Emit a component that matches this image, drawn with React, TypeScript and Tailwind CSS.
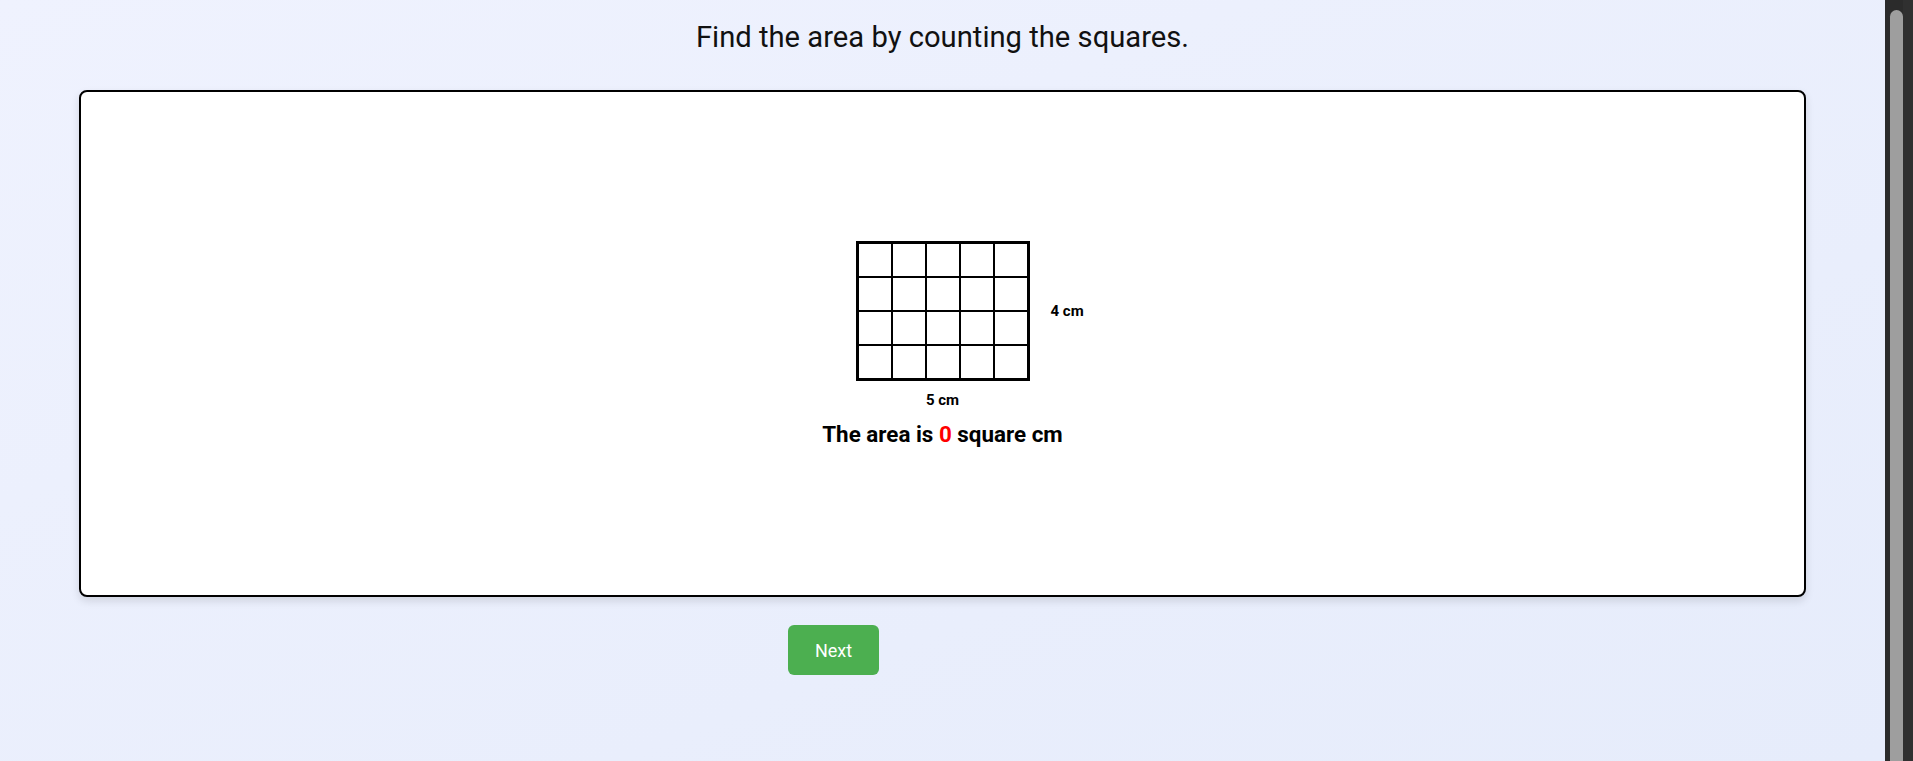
import React from "react";

export default function App() {
  const rows = [0, 1, 2, 3];
  const cols = [0, 1, 2, 3, 4];
  return (
    <div className="flex w-full h-[761px] overflow-hidden font-['Roboto',sans-serif] text-black">
      <main className="flex-1 flex flex-col bg-linear-to-br from-[#eff2fe] to-[#e6ecfb]">
        <h1 className="pt-[21px] text-center text-[29.2px] leading-[33px] font-normal text-[#111]">
          Find the area by counting the squares.
        </h1>
        <section className="mx-[79px] mt-[36px] h-[507px] rounded-lg border-2 border-black bg-white shadow-[0_4px_8px_rgba(0,0,0,0.12)] flex flex-col items-center pt-[149px]">
          <div className="relative">
            <div className="flex flex-col border-2 border-black">
              {rows.map((r) => (
                <div key={r} className="flex">
                  {cols.map((c) => (
                    <div key={c} className="w-[34px] h-[34px] border border-black box-border" />
                  ))}
                </div>
              ))}
            </div>
            <span className="absolute left-full top-1/2 -translate-y-1/2 ml-[21px] text-[15px] leading-[18px] font-bold whitespace-nowrap">
              4 cm
            </span>
          </div>
          <div className="mt-[10px] text-[15px] leading-[18px] font-bold">5 cm</div>
          <p className="mt-[12px] text-[22.4px] leading-[27px] font-bold">
            The area is <span className="text-[#ff0000]">0</span> square cm
          </p>
        </section>
        <div className="pl-[788px] mt-[28px]">
          <button className="w-[91px] h-[50px] rounded-md bg-[#4caf50] text-white text-[18px] flex items-center justify-center">
            Next
          </button>
        </div>
      </main>
      <aside className="w-[28px] shrink-0 flex bg-[#2b2b2b]">
        <div className="w-[5px]" />
        <div className="w-[13px] mt-[10px] rounded-t-full bg-[#9e9e9e]" />
        <div className="flex-1 bg-[#303030]" />
      </aside>
    </div>
  );
}
